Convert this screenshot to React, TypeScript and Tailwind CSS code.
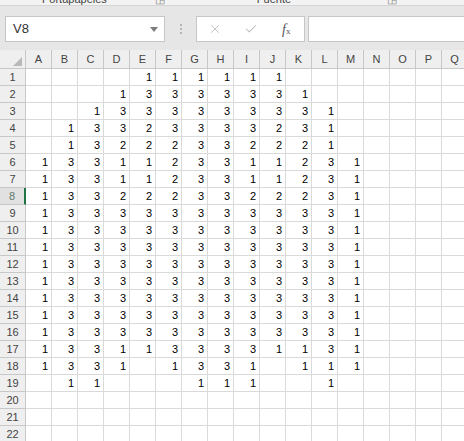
import { X, Check } from 'lucide-react';

const cols = ['A', 'B', 'C', 'D', 'E', 'F', 'G', 'H', 'I', 'J', 'K', 'L', 'M', 'N', 'O', 'P', 'Q'];

// values for columns A..M, '' = empty cell
const data: string[][] = [
  ['', '', '', '', '1', '1', '1', '1', '1', '1'],
  ['', '', '', '1', '3', '3', '3', '3', '3', '3', '1'],
  ['', '', '1', '3', '3', '3', '3', '3', '3', '3', '3', '1'],
  ['', '1', '3', '3', '2', '3', '3', '3', '3', '2', '3', '1'],
  ['', '1', '3', '2', '2', '2', '3', '3', '2', '2', '2', '1'],
  ['1', '3', '3', '1', '1', '2', '3', '3', '1', '1', '2', '3', '1'],
  ['1', '3', '3', '1', '1', '2', '3', '3', '1', '1', '2', '3', '1'],
  ['1', '3', '3', '2', '2', '2', '3', '3', '2', '2', '2', '3', '1'],
  ['1', '3', '3', '3', '3', '3', '3', '3', '3', '3', '3', '3', '1'],
  ['1', '3', '3', '3', '3', '3', '3', '3', '3', '3', '3', '3', '1'],
  ['1', '3', '3', '3', '3', '3', '3', '3', '3', '3', '3', '3', '1'],
  ['1', '3', '3', '3', '3', '3', '3', '3', '3', '3', '3', '3', '1'],
  ['1', '3', '3', '3', '3', '3', '3', '3', '3', '3', '3', '3', '1'],
  ['1', '3', '3', '3', '3', '3', '3', '3', '3', '3', '3', '3', '1'],
  ['1', '3', '3', '3', '3', '3', '3', '3', '3', '3', '3', '3', '1'],
  ['1', '3', '3', '3', '3', '3', '3', '3', '3', '3', '3', '3', '1'],
  ['1', '3', '3', '1', '1', '3', '3', '3', '3', '1', '1', '3', '1'],
  ['1', '3', '3', '1', '', '1', '3', '3', '1', '', '1', '1', '1'],
  ['', '1', '1', '', '', '', '1', '1', '1', '', '', '1'],
  [],
  [],
  [],
];

export default function App() {
  return (
    <div
      className="w-[464px] h-[441px] overflow-hidden bg-white text-[#222]"
      style={{ fontFamily: '"Liberation Sans", Arial, sans-serif' }}
    >
      {/* ribbon group labels, cut off at the top */}
      <div className="h-[6px] overflow-hidden bg-[#f3f3f3] border-b border-[#d5d5d5] flex text-[11px] text-[#444]">
        <div className="-mt-[9px] flex w-full">
          <span className="ml-[42px]">Portapapeles</span>
          <span className="ml-[48px] text-[#888]">◲</span>
          <span className="ml-[92px]">Fuente</span>
          <span className="ml-[96px] text-[#888]">◲</span>
        </div>
      </div>

      {/* formula bar */}
      <div className="h-[44px] bg-[#e6e6e6] flex items-start pt-[10px] pl-[5px]">
        <div className="w-[160px] h-[26px] bg-white border border-[#c6c6c6] flex items-center justify-between pl-[7px] pr-[6px] text-[13px] text-[#333]">
          <span>V8</span>
          <svg width="8" height="5" viewBox="0 0 8 5">
            <path d="M0 0 L8 0 L4 5 Z" fill="#7d7d7d" />
          </svg>
        </div>
        <div className="w-[31px] h-[26px] flex flex-col items-center justify-center gap-[2px]">
          <span className="w-[2px] h-[2px] bg-[#b5b5b5]" />
          <span className="w-[2px] h-[2px] bg-[#b5b5b5]" />
          <span className="w-[2px] h-[2px] bg-[#b5b5b5]" />
        </div>
        <div className="w-[109px] h-[26px] bg-white border border-[#c6c6c6] flex items-center">
          <div className="w-[36px] flex justify-center">
            <X size={14} strokeWidth={1.5} color="#bdbdbd" />
          </div>
          <div className="w-[36px] flex justify-center">
            <Check size={14} strokeWidth={1.8} color="#bdbdbd" />
          </div>
          <div
            className="w-[36px] flex justify-center italic text-[14px] text-[#555]"
            style={{ fontFamily: '"Liberation Serif", "Times New Roman", serif' }}
          >
            <span>
              f<span className="text-[9px] not-italic">x</span>
            </span>
          </div>
        </div>
        <div className="ml-[3px] flex-1 h-[26px] bg-white border border-r-0 border-[#c6c6c6]" />
      </div>

      {/* sheet */}
      <div className="grid grid-cols-[26px_repeat(17,26px)] w-[468px] text-[11px]">
        <div className="h-[19px] bg-[#efefef] border-r border-b border-[#c8c8c8] flex items-end justify-end pr-[3px] pb-[2px]">
          <svg width="9" height="9" viewBox="0 0 9 9">
            <path d="M9 0 L9 9 L0 9 Z" fill="#b9b9b9" />
          </svg>
        </div>
        {cols.map((c) => (
          <div
            key={c}
            className="h-[19px] bg-[#efefef] border-r border-b border-[#c8c8c8] flex items-center justify-center text-[#444]"
          >
            {c}
          </div>
        ))}

        {data.map((r, ri) => {
          const sel = ri === 7;
          return [
            <div
              key={`h${ri}`}
              className={
                sel
                  ? 'h-[17px] bg-[#e1e1e1] border-r-2 border-b border-r-[#217346] border-b-[#c8c8c8] flex items-center justify-center text-[#5e7a69]'
                  : 'h-[17px] bg-[#efefef] border-r border-b border-[#c8c8c8] flex items-center justify-center text-[#444]'
              }
            >
              {ri + 1}
            </div>,
            ...cols.map((c, ci) => (
              <div
                key={`${ri}-${c}`}
                className="h-[17px] border-r border-b border-[#dadada] flex items-center justify-end pr-[3px] text-black"
              >
                {r[ci] ?? ''}
              </div>
            )),
          ];
        })}
      </div>
    </div>
  );
}
